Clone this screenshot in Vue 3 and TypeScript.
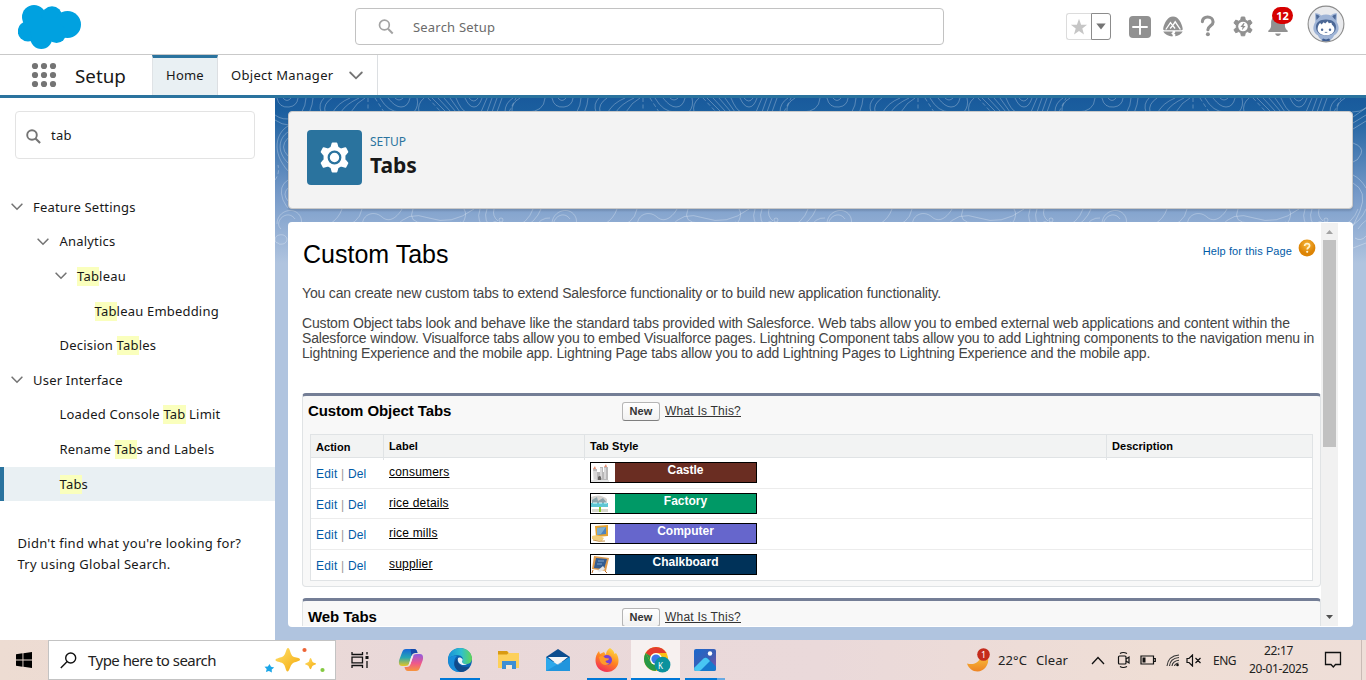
<script setup lang="ts">
interface Part { text: string; hit?: boolean }
interface TreeItem { parts: Part[]; level: number; open?: boolean; active?: boolean }
interface TabRow { label: string; style: string; tone: string }

const tree: TreeItem[] = [
  { parts: [{ text: 'Feature Settings' }], level: 0, open: true },
  { parts: [{ text: 'Analytics' }], level: 1, open: true },
  { parts: [{ text: 'Tab', hit: true }, { text: 'leau' }], level: 2, open: true },
  { parts: [{ text: 'Tab', hit: true }, { text: 'leau Embedding' }], level: 3 },
  { parts: [{ text: 'Decision ' }, { text: 'Tab', hit: true }, { text: 'les' }], level: 1 },
  { parts: [{ text: 'User Interface' }], level: 0, open: true },
  { parts: [{ text: 'Loaded Console ' }, { text: 'Tab', hit: true }, { text: ' Limit' }], level: 1 },
  { parts: [{ text: 'Rename ' }, { text: 'Tab', hit: true }, { text: 's and Labels' }], level: 1 },
  { parts: [{ text: 'Tab', hit: true }, { text: 's' }], level: 1, active: true },
]

const rows: TabRow[] = [
  { label: 'consumers', style: 'Castle', tone: 'castle' },
  { label: 'rice details', style: 'Factory', tone: 'factory' },
  { label: 'rice mills', style: 'Computer', tone: 'computer' },
  { label: 'supplier', style: 'Chalkboard', tone: 'chalkboard' },
]

const dots = [4, 13, 22]
</script>

<template>
  <div class="screen">
    <header class="top">
      <svg class="cloud" width="64" height="45" viewBox="18 4 64 45" fill="#00a1e0">
        <circle cx="34" cy="17" r="12" /><circle cx="52" cy="16.5" r="10.2" />
        <circle cx="67.5" cy="24.5" r="13.5" /><circle cx="28" cy="31.3" r="10.2" />
        <circle cx="41.3" cy="38" r="11" /><circle cx="56.5" cy="33.5" r="9.6" />
        <path d="M28 18h30v20H32z" />
      </svg>
      <div class="global-search">
        <svg width="16" height="16" viewBox="0 0 16 16" fill="none" stroke="#a3a3a3" stroke-width="1.7"><circle cx="6.4" cy="6" r="4.9" /><path d="M10 9.8l4.7 4.7" stroke-width="2" /></svg>
        <span>Search Setup</span>
      </div>
      <div class="actions">
        <div class="fav">
          <span class="fav-star"><svg width="18" height="18" viewBox="0 0 18 18"><path d="M9 .8l2.1 5.9h6l-4.8 3.8 1.7 6.1L9 13l-5 3.6 1.7-6.1L.9 6.700h6z" fill="#c6c6c6" /></svg></span>
          <span class="fav-down"><svg width="10" height="7" viewBox="0 0 10 7"><path d="M.3.4h9.400L5 6.600z" fill="#747474" /></svg></span>
        </div>
        <svg class="a-plus" width="22" height="22" viewBox="0 0 22 22"><rect width="22" height="22" rx="4" fill="#919191" /><path d="M11 4v14M4 11h14" stroke="#fff" stroke-width="1.900" stroke-linecap="round" /></svg>
        <svg class="a-trail" width="22" height="21" viewBox="0 0 22 21">
          <path d="M11 .4c1.400 0 2.700.4 3.700 1.200 3.200 2.400 5.600 7.300 6 11.400.1.700-.3 1.200-1 1.200H2.200c-.7 0-1.100-.5-1-1.200.4-4.100 2.900-9 6.100-11.400C8.400.8 9.600.4 11 .4z" fill="#919191" />
          <path d="M3.800 13.500l4.700-6.800 2.200 3 2.500-3.900 5.200 7.700M8.100 12.500l2.600-3 2.400 3" stroke="#fff" stroke-width="1.300" fill="none" />
          <path d="M1.200 15.500h9.200c1.500.8-2.500 1.800-.4 2.700 1 .5 1.100 1.200.3 2.200-3.600-.1-7.500-1.800-9.100-4.900zM13.200 15.500h7.500c-1.200 2.600-4.500 4.400-7.700 4.800 1-1.200.3-2.300-1-2.700 1-.4 1.300-1.200 1.200-2.100z" fill="#919191" />
        </svg>
        <svg class="a-help" width="16" height="22" viewBox="0 0 16 22"><path d="M2.400 6.600C2.400 3.700 4.600 2 7.600 2c3.100 0 5.500 1.900 5.500 4.900 0 3.700-5.200 3.900-5.200 7.900" fill="none" stroke="#919191" stroke-width="3.100" stroke-linecap="round" /><circle cx="7.900" cy="19.200" r="2" fill="#919191" /></svg>
        <svg class="a-gear" width="20" height="22" viewBox="0 0 20 22">
          <path d="M8.300 1h3.400l.6 3.100 2 1.100 3-1.100 1.800 3-2.400 2v2.600l2.400 2-1.800 3-3-1.100-2 1.100-.6 3.100H8.300l-.6-3.100-2-1.100-3 1.100-1.800-3 2.400-2V9.100L.9 7.100l1.800-3 3 1.100 2-1.100z" fill="#919191" stroke="#919191" stroke-linejoin="round" />
          <circle cx="10" cy="10.500" r="4.800" fill="#fff" /><path d="M10.600 6.900L7.400 11h2.200l-.7 3.300 3.700-4.400h-2.200l1.200-3z" fill="#919191" />
        </svg>
        <div class="bell">
          <svg width="22" height="23" viewBox="0 0 22 23"><path d="M1.500 16.400c1.700-1.400 2.600-2.500 2.600-5.200V8.600C4.100 4.500 7 2 11 2s6.900 2.500 6.900 6.600v2.600c0 2.700.9 3.800 2.600 5.200.7.600.5 1.500-.5 1.500H2c-1 0-1.200-.9-.5-1.500zM8.200 19.600h5.600c-.2 1.600-1.400 2.500-2.800 2.500s-2.600-.9-2.800-2.500z" fill="#919191" /></svg>
          <span class="badge">12</span>
        </div>
        <svg class="avatar" width="38" height="38" viewBox="0 0 38 38">
          <circle cx="19" cy="19" r="17.900" fill="#e9eaed" stroke="#8d8d8d" stroke-width="1.100" />
          <path d="M8.300 17L8 8.500c1.800-.8 4.600.2 6 2 3-1.200 7-1.200 10 0 1.400-1.800 4.200-2.800 6-2L29.700 17c3.300 5.500 2.300 10.500-2.400 13.300-2 4-5 6-8.300 6-3.300 0-6.300-2-8.300-6C6 27.500 5 22.500 8.300 17z" fill="#9fb4d6" />
          <path d="M9 9.500c1.600 0 2.900.8 3.700 2L9.500 15zM29 9.500c-1.600 0-2.900.8-3.700 2l3.200 3.500zM19 14.500c6 0 10 2.700 10 7.500 0 5.500-4.300 8.500-10 8.500S9 27.500 9 22c0-4.800 4-7.500 10-7.500z" fill="#4c6896" />
          <path d="M10.600 24c.2-2.700 1-4.700 2.500-6l1.500 1.400 2-2.200 1.600 1.400 2.400-2.300 1.200 2 2.600-.5.600 1.900c1.600 1.100 2.400 2.500 2.400 4.300 0 4-3.900 6.300-8.500 6.300s-8.300-2.600-8.300-6.300z" fill="#fff" />
          <circle cx="15.100" cy="24.700" r="1.200" fill="#4c6896" /><circle cx="23" cy="24.700" r="1.200" fill="#4c6896" /><path d="M17.800 27.400h2.500" stroke="#4c6896" stroke-width=".8" />
          <path d="M14.500 35.600l1.500-2 3 1 3-1 1.500 2c-3 1-6 1-9 0z" fill="#3f5d91" />
        </svg>
      </div>
    </header>

    <nav class="nav">
      <svg class="waffle" width="26" height="26" viewBox="0 0 26 26" fill="#747474">
        <template v-for="y in dots" :key="y"><circle v-for="x in dots" :key="x" :cx="x" :cy="y" r="3.100" /></template>
      </svg>
      <span class="app-name">Setup</span>
      <a class="tab home">Home</a>
      <a class="tab manager"><span>Object Manager</span>
        <svg width="14" height="9" viewBox="0 0 14 9"><path d="M1.200 1.500L7 7.300l5.800-5.800" fill="none" stroke="#747474" stroke-width="1.800" stroke-linecap="round" /></svg>
      </a>
    </nav>

    <div class="body">
      <aside class="side">
        <div class="quick"><svg width="15" height="15" viewBox="0 0 15 15" fill="none" stroke="#747474" stroke-width="1.900"><circle cx="6" cy="6" r="4.800" /><path d="M9.500 9.500l4.600 4.600" stroke-width="2.100" /></svg><span>tab</span></div>
        <ul class="tree">
          <li v-for="(item, i) in tree" :key="i" :class="['node', 'level-' + item.level, { active: item.active }]">
            <span class="caret"><svg v-if="item.open" width="12" height="8" viewBox="0 0 12 8"><path d="M1.100 1.200L6 6.200l4.900-5" fill="none" stroke="#747474" stroke-width="1.600" stroke-linecap="round" /></svg></span>
            <span class="node-text"><template v-for="(p, j) in item.parts" :key="j"><mark v-if="p.hit">{{ p.text }}</mark><template v-else>{{ p.text }}</template></template></span>
          </li>
        </ul>
        <p class="miss">Didn't find what you're looking for?<br>Try using Global Search.</p>
      </aside>

      <main class="stage">
        <svg class="contours" width="1091" height="160">
          <defs>
            <pattern id="topo" width="275" height="160" patternUnits="userSpaceOnUse">
              <g fill="none" stroke="#fff" stroke-opacity=".27" stroke-width="1">
                <path d="M0 17q8 6 18 3 12-4 13-20M2 0q2 10 12 9 8-1 9-9M8 0q4 5 8 0M0 22q14 10 28 0 9-8 10-22" />
                <path d="M46 14q-3-8 3-14M50 14q-2-8 7-14M58 14Q63 5 75 0M66 14Q71 6 84 0M76 14q6-10 14-14M105 0q8 14 20 14M113 0q7 9 13 9 7 0 9-9M120 0q4 4 8 0" />
                <path d="M139 14q5-6 3-14M144 14q-2-8 5-14M157 0l14 14M163 0l13 14M169 0l12 14M175 0l10 14M181 0q5 12 10 14M190 0q4 9 9 9t8-9M194 0q5 6 9 0M212 0l-6 14M217 0l-5 14M222 0l-5 14M227 0l-5 14M238 0q-8 5-8 14M245 0q-9 5-8 14M252 14q17 0 18-14" />
                <path d="M93 0v14M100 0l9 14M153 0l13 14M234 14l7-14M0 82q5-7 3-15" stroke-dasharray="4 2.500" />
                <path d="M13 28C1 35-4 54 13 73M13 34C4 40 1 53 13 65M13 40q-9 9 0 18M13 82q-10 6-5 20 3 6 5 8M13 90q-6 6 0 13M2 126c0-14 19-19 24-6 2 7-2 11-8 13M6 131c-8-7 6-21 14-10M3 145c-4 0-4-7 1-8 8-2 11 7 4 9q-4 1-5-1" />
                <path d="M55 126q9-6 12-15M64 129q20-2 23-18M88 129c-3-11 10-18 19-10s18-4 20-8M120 130q12-18 34-10t45-9M138 111q-6 14 12 14t37 1q6-9 2-15M158 127q17 3 28-3M205 111q-5 14 8 20M212 111q-5 12 7 21M219 111q-2 7 4 12M238 130q15-5 20-19M246 131q15-7 20-20M258 131q8-12 17-11" />
                <circle cx="220" cy="126" r="2.500" /><circle cx="226" cy="122" r="2" />
              </g>
            </pattern>
          </defs>
          <rect width="1091" height="160" fill="url(#topo)" />
          <g fill="none" stroke="#fff" stroke-opacity=".3"><path d="M1078 19l13-9M1078 25l13-8M1078 31l13-8M1078 45q11 4 8 11t-8 8M1078 85q15 8 7 28l-7 15M1078 77q8 4 13 13M1080 140q6 4 11-2M1078 150l13-5" /></g>
        </svg>

        <section class="page-head">
          <span class="head-icon"><svg width="29" height="31" viewBox="0 0 30 32"><path d="M13 1.500h4l1.200 4.200 3.600 2 4.500-1.300 2 3.800-3 3.500v4.600l3 3.500-2 3.800-4.500-1.300-3.600 2-1.200 4.200h-4l-1.200-4.200-3.600-2-4.500 1.300-2-3.800 3-3.500v-4.600l-3-3.500 2-3.800 4.500 1.300 3.600-2z" fill="#fff" stroke="#fff" stroke-width="2" stroke-linejoin="round" /><circle cx="15" cy="16" r="6" fill="none" stroke="#2a739e" stroke-width="2.300" /></svg></span>
          <div><p class="eyebrow">SETUP</p><h1>Tabs</h1></div>
        </section>

        <section class="frame">
          <div class="doc">
            <div class="doc-top"><h2>Custom Tabs</h2>
              <a class="help">Help for this Page <svg width="18" height="18" viewBox="0 0 18 18"><defs><radialGradient id="orb" cx=".5" cy=".3"><stop offset="0" stop-color="#f7b63c" /><stop offset="1" stop-color="#dd8405" /></radialGradient></defs><circle cx="9" cy="9" r="8.400" fill="url(#orb)" /><path d="M6.600 7c0-1.500 1-2.300 2.500-2.300s2.500.8 2.500 2.100c0 1.700-2.400 1.700-2.400 3.700" fill="none" stroke="#fff3d0" stroke-width="1.700" /><circle cx="9.200" cy="12.800" r="1.100" fill="#fff3d0" /></svg></a>
            </div>
            <p class="intro first">You can create new custom tabs to extend Salesforce functionality or to build new application functionality.</p>
            <p class="intro">Custom Object tabs look and behave like the standard tabs provided with Salesforce. Web tabs allow you to embed external web applications and content within the<br>Salesforce window. Visualforce tabs allow you to embed Visualforce pages. Lightning Component tabs allow you to add Lightning components to the navigation menu in<br>Lightning Experience and the mobile app. Lightning Page tabs allow you to add Lightning Pages to Lightning Experience and the mobile app.</p>

            <div class="block">
              <div class="block-head"><h3>Custom Object Tabs</h3><button>New</button><a>What Is This?</a></div>
              <div class="grid">
                <div class="row head"><span class="act">Action</span><span>Label</span><span>Tab Style</span><span>Description</span></div>
                <div v-for="r in rows" :key="r.label" class="row">
                  <span class="act"><a>Edit</a> | <a>Del</a></span>
                  <span><a class="name">{{ r.label }}</a></span>
                  <span class="style-cell"><span :class="['swatch', r.tone]">
                    <i>
                      <svg v-if="r.tone === 'castle'" width="20" height="19" viewBox="0 0 20 19"><path d="M2 6h4v3h3V4h3v5h1V4h4v13H3z" fill="#b9b8b9" /><path d="M3 8v9h2V8M10 5v10M14 5v11" stroke="#e9e9e9" stroke-width="1.300" fill="none" /><path d="M7 17v-3q2-2 3 0v3z" fill="#656363" /><path d="M2 6l2-3 1 3zM13 4l2-3 1 3z" fill="#e69074" /><path d="M0 18h18" stroke="#ccc" /></svg>
                      <svg v-else-if="r.tone === 'factory'" width="20" height="19" viewBox="0 0 20 19"><path d="M0 3q9-4 16 2v6H1z" fill="#d5d3d0" /><path d="M1 6l5-3 1 4 5-3 4 5v4H1z" fill="#8ea5ac" /><path d="M0 9h17v4H0z" fill="#5ec6d4" /><path d="M2 9h4M8 9h3M13 9h3" stroke="#dfffff" /><path d="M1 15h16v3H1z" fill="#d8d8cf" /><path d="M9 13v5" stroke="#8bc928" stroke-width="2" /></svg>
                      <svg v-else-if="r.tone === 'computer'" width="20" height="19" viewBox="0 0 20 19"><path d="M4 2l13-1v11l-12 1z" fill="#e5a331" /><path d="M6 4l9-1v7l-9 1z" fill="#4f83bc" /><path d="M6 4l9-1-5 7-4 1z" fill="#7fafcf" /><path d="M1 12q6-2 12 2l-2 3q-6 0-10-2z" fill="#f2cf7d" /><path d="M2 16q6 2 12 1" stroke="#c49149" fill="none" /></svg>
                      <svg v-else width="20" height="19" viewBox="0 0 20 19"><path d="M3 1l15 2-3 13-14-2z" fill="#df9b4c" /><path d="M5 3l11 1-3 10-10-1z" fill="#345d91" /><path d="M7 6h6M6 9h5" stroke="#7ca5cc" /><path d="M6 16l6-5 2 3-5 3z" fill="#e5e7e8" /><path d="M2 15l-1 3M14 16l2 2" stroke="#bf6c26" /></svg>
                    </i><b>{{ r.style }}</b></span></span>
                  <span></span>
                </div>
              </div>
            </div>

            <div class="block next">
              <div class="block-head"><h3>Web Tabs</h3><button>New</button><a>What Is This?</a></div>
            </div>
          </div>
          <div class="scroll">
            <svg width="17" height="17" viewBox="0 0 17 17"><path d="M5 11l3.500-4 3.500 4z" fill="#a3a3a3" /></svg>
            <span class="thumb"></span>
            <svg width="17" height="17" viewBox="0 0 17 17"><path d="M5 6l3.500 4L12 6z" fill="#505050" /></svg>
          </div>
        </section>
      </main>
    </div>

    <footer class="taskbar">
      <span class="start"><svg width="16" height="16" viewBox="0 0 16 16" fill="#000"><path d="M0 2.200l6.500-.9v6.200H0zM7.400 1.200L16 0v7.500H7.400zM0 8.400h6.500v6.300L0 13.800zM7.400 8.400H16V16l-8.600-1.200z" /></svg></span>
      <div class="task-search">
        <svg width="17" height="17" viewBox="0 0 17 17" fill="none" stroke="#111" stroke-width="1.400"><circle cx="10.700" cy="6" r="5" /><path d="M7.200 9.600L.8 16" /></svg>
        <span>Type here to search</span>
        <svg class="sparkles" width="62" height="28" viewBox="0 0 62 28">
          <defs><linearGradient id="gold" x2="1" y2="1"><stop stop-color="#ffe16b" /><stop offset="1" stop-color="#f4a90c" /></linearGradient></defs>
          <path d="M24 2c2 0 2.500 7 5 8.500s7 1 7 3-5 2-7.500 4-3 8-5 8-1.800-6-4.500-8-7.500-1.500-7.500-3.500 5.500-2 8-4S22 2 24 2z" fill="url(#gold)" />
          <path d="M46.500 12c1 0 1.500 3.500 2.500 4.300s3 .5 3 1.500-2.300 1.300-3.300 2-1.200 3.500-2.200 3.500-1.200-2.500-2.200-3.500-3.300-.7-3.300-1.700 2.500-1 3.500-2 1-4.100 2-4.100z" fill="url(#gold)" />
          <path d="M5.500 18l1.500 2.800 3.200.7-2.500 2 .2 3-3-1.400-3 1 .8-3L.5 20.800l3.400-.2z" fill="#1ba6e8" /><circle cx="40.500" cy="4" r="2.100" fill="#ed6436" /><circle cx="58.500" cy="24" r="2.100" fill="#84c941" />
        </svg>
      </div>
      <div class="apps">
        <span class="app tasks"><svg width="18" height="18" viewBox="0 0 18 18" fill="none" stroke="#111" stroke-width="1.300"><path d="M1 1v2.500h10.500V1M1 17v-2.500h10.500V17M1 6.200h10.500v5.600H1zM16 1v2.500M16 10v7" /><path d="M14.500 5h3v3h-3z" fill="#111" stroke="none" /></svg></span>
        <span class="app"><svg width="26" height="24" viewBox="0 0 26 24"><defs><linearGradient id="cpA" x2="0" y2="1"><stop stop-color="#1767d8" /><stop offset=".5" stop-color="#26a5b4" /><stop offset="1" stop-color="#e8c622" /></linearGradient><linearGradient id="cpB" x2="0" y2="1"><stop stop-color="#8e5be0" /><stop offset=".55" stop-color="#f0588a" /><stop offset="1" stop-color="#f7953b" /></linearGradient></defs><path d="M8 1h8c2 0 3 1.500 3.500 4H17c-2 0-3 1-3.500 3l-2 6.500C10.800 17 10 18 7 18H4C1 18 .5 15 1.200 12L4 4.500C4.800 2 6 1 8 1z" fill="url(#cpA)" /><path d="M18 23h-8c-2 0-3-1.500-3.500-4H9c2 0 3-1 3.500-3l2-6.500C15.200 7 16 6 19 6h3c3 0 3.500 3 2.800 6L22 19.500c-.8 2.500-2 3.500-4 3.500z" fill="url(#cpB)" /><path d="M12.500 1H16c2 0 3 1.500 3.500 4H17c-2 0-3 1-3.500 3z" fill="#1649a9" /><path d="M13.200 8.500l2.300-1-3 8.500-2 1.500z" fill="#f4ecee" /></svg></span>
        <span class="app on"><svg width="26" height="26" viewBox="0 0 26 26"><defs><linearGradient id="edA"><stop stop-color="#1791d8" /><stop offset=".55" stop-color="#2fbfcf" /><stop offset="1" stop-color="#61d654" /></linearGradient></defs><circle cx="13" cy="13" r="12" fill="#0c63b4" /><path d="M1 12C1.500 5.500 6.500 1 13 1c7 0 12 5 12 10.500 0 3.500-2.600 5.700-5.800 5.700-3 0-4.800-1.200-4-2.500 2-3.400-.4-6.500-4.200-6.500C6 8.200 2.500 10 1 13z" fill="url(#edA)" /><path d="M10 9c-5 4-3.500 13 3.500 16C6 25.600 1 20 1 13c2-3.500 5-4.600 9-4z" fill="#188cd9" /><path d="M11 11c-2 5 3 10.500 12 8.500-2 3.500-5.500 5.500-9.500 5.500C6 22 5.500 14 11 11z" fill="#114a8b" /><path d="M11 11c1-1 3.500-.5 4.500 1 .4 1-.2 2-.5 3 .3 1.500 2.500 2.400 5 2-4.500 3-10.500-1-9-6z" fill="#eaf4fa" /></svg></span>
        <span class="app"><svg width="24" height="20" viewBox="0 0 24 20"><path d="M1 1h9l2 2h10v15H1z" fill="#fdd05a" /><path d="M1 1h9l1.500 2L10 4.500H1z" fill="#d99a11" /><path d="M5 19v-8h14v8h-4v-4H9v4z" fill="#3d8fd4" /><path d="M9 15h6v4H9z" fill="#f5e7d2" /></svg></span>
        <span class="app"><svg width="26" height="24" viewBox="0 0 26 24"><path d="M1 9L13 1l12 8v5H1z" fill="#0c4d8e" /><path d="M3 9h20l-10 8z" fill="#f5f5f6" /><path d="M1 9l12 8 12-8v14H1z" fill="#2da8eb" /><path d="M1 23L25 9v14z" fill="#1685d2" fill-opacity=".55" /></svg></span>
        <span class="app on"><svg width="26" height="26" viewBox="0 0 26 26"><defs><linearGradient id="ffA" x1=".8" y1="0" x2=".3" y2="1"><stop stop-color="#ffe043" /><stop offset=".5" stop-color="#ff8520" /><stop offset="1" stop-color="#f22a5a" /></linearGradient></defs><path d="M16 1c3 2 4 3.500 4.500 6L22 6c2 3 2.500 5 2.500 8 0 6-5 11-11.500 11S1.500 20 1.500 13.500C1.500 10 2.500 7 5 4l1 3 4-2 2 3c0-3 1-5 4-7z" fill="url(#ffA)" /><circle cx="13" cy="13" r="5" fill="#7a42d4" /><path d="M5 10c3-2 5-1 6 1l4 .5c0 1.500-2 2-3.500 2.500 0 1.500 2 2.500 4 2-2 3-8 2.500-9.500-2z" fill="#ff9a2a" /></svg></span>
        <span class="app on chrome"><svg width="30" height="28" viewBox="0 0 30 28"><circle cx="13" cy="13" r="12" fill="#fbc116" /><path d="M2.600 7A12 12 0 0 1 23.400 7H13a6 6 0 0 0-5.500 3.500z" fill="#e33b2e" /><path d="M2.600 7A12 12 0 0 0 12.500 25l5-8.500a6 6 0 0 1-10-.5z" fill="#279847" /><path d="M2.600 7l5.200 9L12 13z" fill="#279847" /><circle cx="13" cy="13" r="6" fill="#fff" /><circle cx="13" cy="13" r="4.600" fill="#3b78e7" /><circle cx="19.500" cy="18.700" r="7.900" fill="#0b929d" /></svg><b>K</b></span>
        <span class="app on photos"><svg width="24" height="24" viewBox="0 0 24 24"><defs><linearGradient id="phA" x2="1" y2="1"><stop stop-color="#1968cd" /><stop offset=".55" stop-color="#3d5eb4" /><stop offset="1" stop-color="#8a53a8" /></linearGradient></defs><rect x="1" y="1" width="22" height="22" rx="2" fill="url(#phA)" /><path d="M3 21.500L11.500 10q1.500-1.300 3 0L23 18.500V21q0 2-2 2H3z" fill="#1679cd" /><path d="M1.500 19.500L10.500 10.500q2-1.500 4 0L17 13 8 22q-1 1-2 1H3q-2 0-2-2z" fill="#48c7f3" /><circle cx="17" cy="5.500" r="2.200" fill="#fff" /></svg></span>
      </div>
      <div class="tray">
        <span class="weather"><svg width="26" height="26" viewBox="0 0 26 26"><defs><linearGradient id="moon" x2="0" y2="1"><stop stop-color="#f9c33c" /><stop offset="1" stop-color="#ee8423" /></linearGradient></defs><path d="M1 16.500c7 2 13-1 14-8.500l7 2.500c1.500 7-4 14-10.500 14C6.500 24.500 2.500 21 1 16.500z" fill="url(#moon)" /><circle cx="17.500" cy="7.500" r="6.300" fill="#c42b1c" /></svg><em>1</em></span>
        <span class="temp">22°C</span><span class="sky">Clear</span>
        <svg class="t-up" width="14" height="9" viewBox="0 0 14 9"><path d="M1 8l6-6.500L13 8" fill="none" stroke="#111" stroke-width="1.300" /></svg>
        <svg class="t-cam" width="14" height="18" viewBox="0 0 14 18" fill="none" stroke="#111" stroke-width="1.200"><rect x="1.500" y="5" width="7.500" height="8" rx="1" /><path d="M9 8l3-2v6l-3-2M3 2.500q3-2 7 0M3 15.500q3 2 7 0" /></svg>
        <svg class="t-bat" width="16" height="10" viewBox="0 0 16 10"><path d="M1 1h12.500v8H1zM14 3.500h1.300v3H14" fill="none" stroke="#111" stroke-width="1.200" /><path d="M2.500 2.500h3v5h-3z" fill="#111" /></svg>
        <svg class="t-net" width="14" height="14" viewBox="0 0 14 14" fill="none" stroke="#333" stroke-width="1.100"><path d="M1 13Q2 3 13 2M3.500 13Q4 5.500 13 4.500M6 13q.5-5 7-5.700M8.500 13q.5-2.500 4-3" /><circle cx="11.500" cy="12" r="1.300" fill="#111" stroke="none" /></svg>
        <svg class="t-vol" width="16" height="13" viewBox="0 0 16 13" fill="none" stroke="#111" stroke-width="1.200"><path d="M1 4.500h2L6.500 1v11L3 8.500H1zM9.500 4l5 5M14.500 4l-5 5" /></svg>
        <span class="lang">ENG</span>
        <span class="clock"><span>22:17</span><span class="date">20-01-2025</span></span>
        <svg class="t-note" width="18" height="18" viewBox="0 0 18 18"><path d="M1.500 1.500h15v12h-5L9.300 16 7 13.500H1.500z" fill="none" stroke="#111" stroke-width="1.300" /></svg>
        <span class="peek"></span>
      </div>
    </footer>
  </div>
</template>

<style>
html, body { margin: 0; overflow: hidden; }
</style>

<style scoped>
* { box-sizing: border-box; }
p, h1, h2, h3, ul { margin: 0; padding: 0; }
svg { display: block; flex: none; }
.screen { width: 1366px; height: 680px; display: flex; flex-direction: column; overflow: hidden; background: #fff; color: #181818; font-family: "Noto Sans", "Open Sans", sans-serif; font-size: 13px; }
.top { flex: none; height: 55px; border-bottom: 1px solid #c9c9c9; display: flex; align-items: flex-start; }
.cloud { margin: 4px 0 0 18px; }
.global-search { margin: 8px 0 0 273px; width: 589px; height: 37px; border: 1px solid #c2c2c2; border-radius: 4px; display: flex; align-items: center; padding-left: 22px; color: #6b6b6b; letter-spacing: .2px; }
.global-search span { margin-left: 19px; }
.actions { display: flex; align-items: flex-start; margin-left: 122px; }
.fav { display: flex; margin-top: 13px; }
.fav-star, .fav-down { height: 27px; display: flex; align-items: center; justify-content: center; border: 1px solid #dcdcdc; }
.fav-star { width: 25px; border-right: 0; border-radius: 3px 0 0 3px; }
.fav-down { width: 20px; border: 1px solid #8c8c8c; border-radius: 0 3px 3px 0; }
.a-plus { margin: 16px 0 0 18px; }
.a-trail { margin: 16px 0 0 11px; }
.a-help { margin: 15px 0 0 16px; }
.a-gear { margin: 16px 0 0 17px; }
.bell { position: relative; margin: 14px 0 0 14px; width: 22px; }
.badge { position: absolute; left: 5px; top: -7px; width: 21px; height: 17px; border-radius: 9px; background: #d60000; color: #fff; font-weight: 700; font-size: 11px; line-height: 17px; text-align: center; }
.avatar { margin: 5px 0 0 18px; }

.nav { flex: none; height: 43px; border-bottom: 3px solid #2a739e; display: flex; }
.waffle { margin: 7px 0 0 31px; }
.app-name { margin-left: 18px; width: 77px; font-size: 18.8px; line-height: 42px; }
.tab { display: flex; line-height: 41px; border-right: 1px solid #dcdfe2; }
.home { width: 66px; justify-content: center; background: #e9f0f3; border-left: 1px solid #dfe3e6; border-top: 3px solid #2a739e; line-height: 35px; letter-spacing: .2px; }
.manager { width: 160px; padding-left: 13px; align-items: center; white-space: nowrap; letter-spacing: .3px; }
.manager span { width: 118px; }

.body { flex: none; height: 542px; display: flex; }
.side { width: 275px; padding-top: 13px; }
.quick { margin-left: 15px; width: 240px; height: 48px; border: 1px solid #e3e3e3; border-radius: 4px; display: flex; align-items: center; padding-left: 10px; }
.quick span { margin-left: 10px; letter-spacing: .2px; }
.quick svg { margin-top: 3px; }
.tree { list-style: none; margin-top: 31px; letter-spacing: .2px; }
.node { height: 34.6px; display: flex; align-items: center; border-left: 4px solid transparent; white-space: pre; }
.node.active { background: #e9f0f3; border-left-color: #2a739e; }
.caret { width: 12px; margin-right: 10.500px; }
.level-0 { padding-left: 6.500px; }
.level-1 { padding-left: 33px; }
.level-2 { padding-left: 50.500px; }
.level-3 { padding-left: 68px; }
.node-text { line-height: 19px; }
mark { background: #faffbd; color: inherit; display: inline-block; height: 19px; }
.miss { margin: 32px 0 0 17.500px; line-height: 21px; white-space: nowrap; letter-spacing: .28px; }

.stage { position: relative; flex: 1; padding: 13px 13px 13px 13px; background: linear-gradient(#195a9c 0, #1b5f9f 14px, #7599c8 95px, #b0c4df 165px); }
.contours { position: absolute; left: 0; top: 0; }
.page-head { position: relative; height: 98px; border: 1px solid #c9c9c9; border-radius: 4px; background: #f3f3f3; box-shadow: 0 2px 2px rgba(0, 0, 0, .12); display: flex; padding: 18px; }
.head-icon { width: 55px; height: 55px; border-radius: 4px; background: #2a739e; display: flex; align-items: center; justify-content: center; margin-right: 8px; }
.eyebrow { font-size: 12px; line-height: 16px; margin-top: 4px; color: #2a739e; }
h1 { font-size: 21px; line-height: 28px; margin-top: 1px; }
.frame { position: relative; margin-top: 13px; height: 405px; border-radius: 4px; background: #fff; display: flex; overflow: hidden; padding-bottom: 1px; padding-top: 1px; }
.doc { width: 1033px; padding: 0 0 0 14px; overflow: hidden; font-family: "Liberation Sans", Arial, sans-serif; color: #000; }
.doc-top { height: 63px; display: flex; justify-content: space-between; }
h2 { font-weight: 400; font-size: 25px; line-height: 30px; margin: 16px 0 0 1px; }
.help { display: flex; margin-top: 16px; margin-right: 5px; font-size: 11px; line-height: 24px; color: #015ba7; gap: 6px; letter-spacing: .1px; }
.intro { font-size: 14px; line-height: 15px; color: #444; white-space: nowrap; letter-spacing: -.172px; }
.first { margin-bottom: 15px; }
.block { margin-top: 32px; height: 194px; width: 1019px; border: 1px solid #e0e3e5; border-top: 3px solid #747e96; border-radius: 4px; background: #f8f8f8; padding: 0 7px; }
.next { margin-top: 11px; }
.block-head { height: 38px; display: flex; align-items: center; padding-bottom: 8px; }
.next .block-head { padding-bottom: 6px; }
.block h3 { font-size: 15px; width: 314px; margin-left: -2px; margin-top: -1px; letter-spacing: -.08px; }
.block button { width: 38px; height: 19px; padding: 0; border: 1px solid #b5b5b5; border-bottom-color: #7f7f7f; border-radius: 3px; background: linear-gradient(#fff, #f1f1f1); font: bold 11px "Liberation Sans", Arial, sans-serif; letter-spacing: .2px; color: #333; }
.block-head a { font-size: 12px; margin-left: 5px; color: #333; text-decoration: underline; letter-spacing: .22px; }
.grid { width: 1003px; border: 1px solid #e0e3e5; background: #fff; }
.row { display: grid; grid-template-columns: 72px 201px 522px 1fr; height: 30.5px; border-bottom: 1px solid #ececec; font-size: 12px; }
.row:last-child { border-bottom: 0; }
.row > span { padding-left: 6px; line-height: 28px; color: #999; letter-spacing: .2px; }
.row > .act { line-height: 33px; padding-left: 5px; }
.row.head { height: 23px; background: #f2f3f3; border-bottom-color: #e0e3e5; font-size: 11px; font-weight: 700; }
.row.head > span { line-height: 23px; color: #000; border-left: 1px solid #e0e3e5; padding-left: 5px; letter-spacing: .05px; }
.row.head > .act { line-height: 25px; border-left: 0; }
.act a { color: #015ba7; }
.name { color: #000; text-decoration: underline; }
.row > .style-cell { display: flex; align-items: flex-start; padding-top: 4px; letter-spacing: 0; }
.swatch { display: flex; width: 167px; height: 21px; border: 1px solid #000; color: #fff; }
.swatch i { width: 24px; background: #fff; overflow: hidden; }
.swatch b { flex: 1; line-height: 15px; text-align: center; }
.castle b { background: #6a2d22; }
.factory b { background: #009966; }
.computer b { background: #6666cc; }
.chalkboard b { background: #003259; }
.scroll { width: 17px; background: #f1f1f1; display: flex; flex-direction: column; }
.thumb { margin: 0 2px 162px; height: 207px; background: #c1c1c1; }

.taskbar { flex: none; height: 40px; display: flex; background: linear-gradient(90deg, #eddcd2 0, #e9d8d9 30%, #ead9da 60%, #efded5 85%, #eeded8 100%); color: #222; }
.start { width: 48px; display: flex; align-items: center; justify-content: center; }
.task-search { width: 288px; border: 1px solid #c3c3c3; background: #fff; display: flex; align-items: center; padding-left: 11px; }
.task-search span { margin-left: 11px; font-size: 15px; width: 176px; white-space: nowrap; letter-spacing: -.53px; }
.sparkles { margin-top: -1px; }
.apps { display: flex; }
.app { position: relative; width: 49px; display: flex; align-items: center; justify-content: center; }
.app.tasks { margin: 0 2px 0 -1px; }
.app.on::after { content: ""; position: absolute; bottom: 0; left: 5px; right: 4px; height: 2px; background: #0078d7; }
.app.chrome { background: #f7f1f0; }
.app.chrome::after { left: 0; right: 0; }
.chrome svg { margin-left: 5px; }
.chrome b { position: absolute; left: 27px; top: 20px; font-size: 8px; line-height: 12px; color: #fff; font-weight: 400; }
.app.photos::after { right: 4px; background: linear-gradient(90deg, #0078d7 80%, #68a9e2 80%); }
.tray { margin-left: auto; display: flex; align-items: center; white-space: nowrap; }
.weather { position: relative; margin-right: 6px; }
.weather em { position: absolute; left: 14px; top: 1px; width: 7px; font-style: normal; font-size: 9px; line-height: 13px; color: #fff; text-align: center; }
.temp { width: 38px; letter-spacing: .1px; }
.sky { width: 55px; letter-spacing: .1px; }
.t-cam { margin-left: 12px; }
.t-bat { margin-left: 9px; }
.t-net { margin-left: 10px; }
.t-vol { margin-left: 6px; }
.lang { margin-left: 11px; width: 35px; font-size: 12px; letter-spacing: -.5px; }
.clock { width: 61px; display: flex; flex-direction: column; align-items: center; font-size: 12px; line-height: 18px; letter-spacing: -.35px; }
.t-note { margin-left: 15px; }
.peek { width: 1px; height: 40px; background: #c9bab5; margin: 0 4px 0 19px; }
</style>
